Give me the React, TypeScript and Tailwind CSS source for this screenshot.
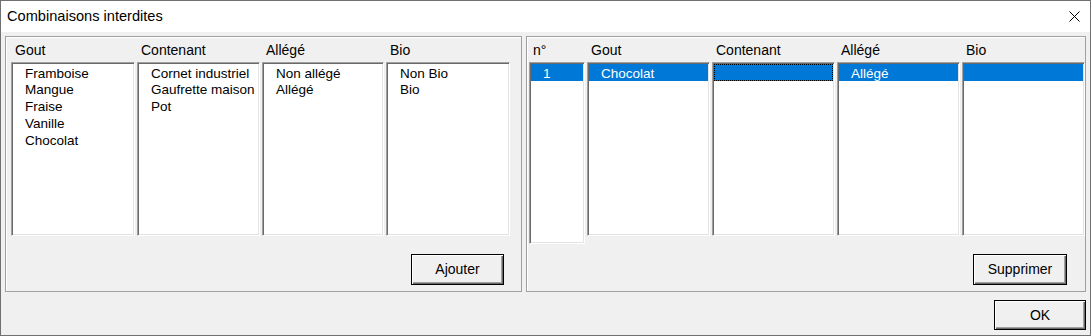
import React from "react";

type Column = {
  title: string;
  width: string;
  height?: string;
  items: string[];
  selected?: boolean;
  focused?: boolean;
};

const leftColumns: Column[] = [
  { title: "Gout", width: "w-[124px]", items: ["Framboise", "Mangue", "Fraise", "Vanille", "Chocolat"] },
  { title: "Contenant", width: "w-[123px]", items: ["Cornet industriel", "Gaufrette maison", "Pot"] },
  { title: "Allégé", width: "w-[122px]", items: ["Non allégé", "Allégé"] },
  { title: "Bio", width: "w-[124px]", items: ["Non Bio", "Bio"] },
];

const rightColumns: Column[] = [
  { title: "n°", width: "w-[56px]", height: "h-[182px]", items: ["1"], selected: true },
  { title: "Gout", width: "w-[123px]", items: ["Chocolat"], selected: true },
  { title: "Contenant", width: "w-[123px]", items: [""], selected: true, focused: true },
  { title: "Allégé", width: "w-[123px]", items: ["Allégé"], selected: true },
  { title: "Bio", width: "w-[123px]", items: [""], selected: true },
];

const ListColumn = ({ col }: { col: Column }) => (
  <div className={`flex flex-col ${col.width}`}>
    <div className="h-[25px] flex items-center pl-[4px] pt-[1px] text-[14px] text-black">{col.title}</div>
    <div
      className={`${col.height ?? "h-[174px]"} bg-white border border-t-[#a0a0a0] border-l-[#a0a0a0] border-b-white border-r-white shadow-[inset_1px_1px_0_#696969,inset_-1px_-1px_0_#e3e3e3] p-[1px]`}
    >
      {col.items.map((it, i) => {
        const sel = col.selected && i === 0;
        return (
          <div
            key={i}
            className={`h-[16.75px] flex items-center pl-[12px] pt-[2px] text-[13.5px] leading-none whitespace-nowrap ${
              sel ? "bg-[#0078d7] text-white" : "text-black"
            } ${col.focused && sel ? "outline-1 outline-dotted outline-black -outline-offset-1" : ""}`}
          >
            {it}
          </div>
        );
      })}
    </div>
  </div>
);

const WinButton = ({ label, className }: { label: string; className: string }) => (
  <button
    className={`${className} bg-[#f0f0f0] border border-black shadow-[inset_1px_1px_0_#ffffff,inset_-1px_-1px_0_#696969,inset_-2px_-2px_0_#a0a0a0] text-[14px] text-black flex items-center justify-center`}
  >
    {label}
  </button>
);

export default function App() {
  return (
    <div
      className="w-[1091px] h-[336px] bg-[#f0f0f0] border border-[#707070] flex flex-col overflow-hidden"
      style={{ fontFamily: '"Liberation Sans", Arial, sans-serif' }}
    >
      {/* Title bar */}
      <div className="h-[31px] bg-white flex items-center justify-between pl-[6px] pr-[9px]">
        <span className="text-[14.6px] text-black">Combinaisons interdites</span>
        <svg width="11" height="11" viewBox="0 0 11 11" className="mr-[1px]">
          <path d="M0.5 0.5 L10.5 10.5 M10.5 0.5 L0.5 10.5" stroke="#000" strokeWidth="1" />
        </svg>
      </div>

      {/* Panels */}
      <div className="mt-[4px] pl-[4px] flex gap-[4px] h-[256px]">
        <div className="w-[517px] border border-[#a0a0a0] shadow-[inset_1px_1px_0_#ffffff] flex flex-col pl-[5px]">
          <div className="flex gap-[2px]">
            {leftColumns.map((c) => (
              <ListColumn key={c.title} col={c} />
            ))}
          </div>
          <div className="flex justify-end pr-[17px] mt-[18px]">
            <WinButton label="Ajouter" className="w-[93px] h-[31px]" />
          </div>
        </div>

        <div className="w-[560px] border border-[#a0a0a0] shadow-[inset_1px_1px_0_#ffffff] flex flex-col pl-[2px]">
          <div className="flex gap-[2px] items-start">
            {rightColumns.map((c) => (
              <ListColumn key={c.title} col={c} />
            ))}
          </div>
          <div className="flex justify-end pr-[18px] mt-[10px]">
            <WinButton label="Supprimer" className="w-[94px] h-[31px]" />
          </div>
        </div>
      </div>

      {/* Footer */}
      <div className="flex justify-end pr-[4px] mt-[8px]">
        <WinButton label="OK" className="w-[92px] h-[30px]" />
      </div>
    </div>
  );
}
